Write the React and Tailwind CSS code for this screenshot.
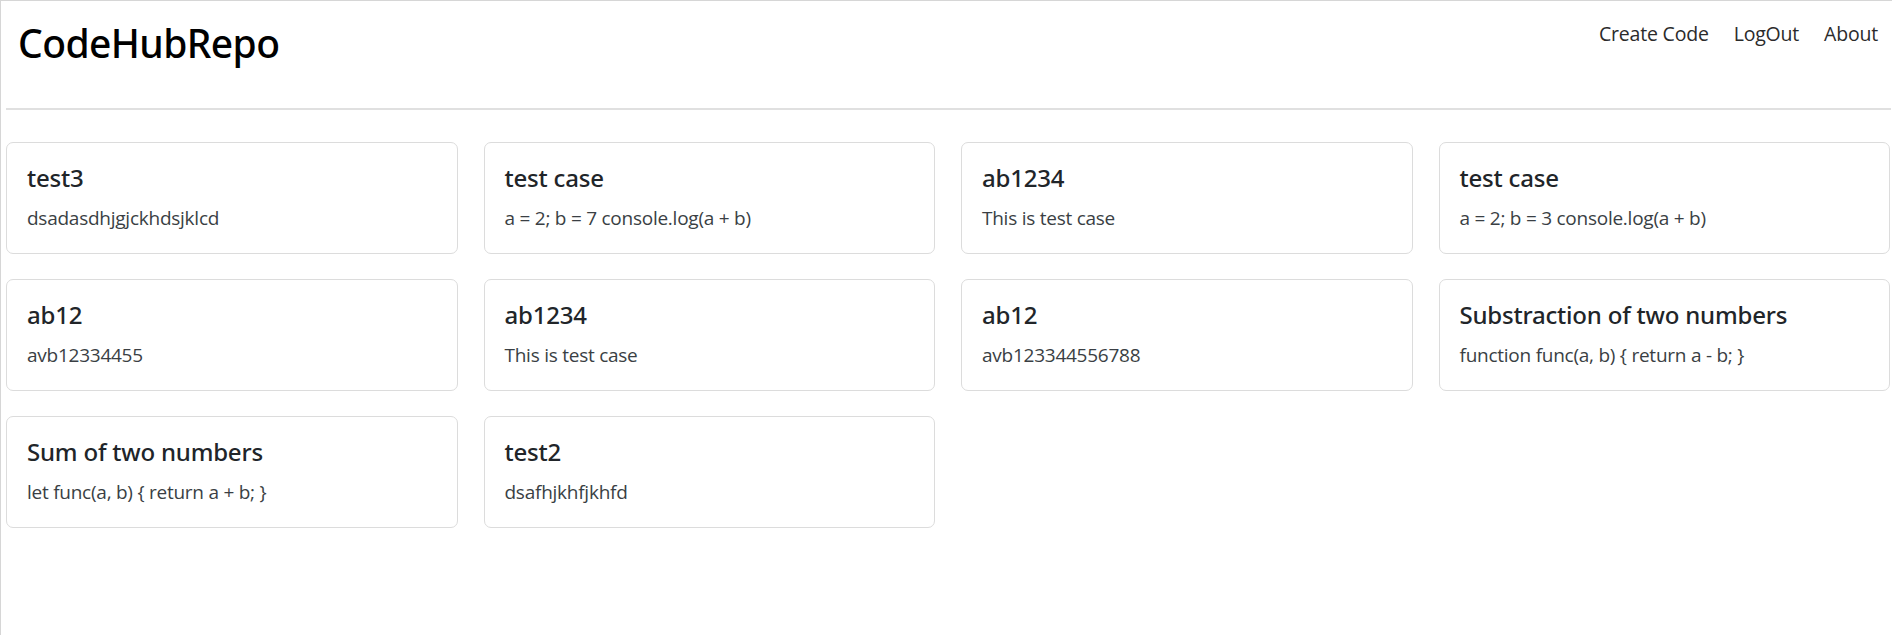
import React from "react";

const cards = [
  { t: "test3", d: "dsadasdhjgjckhdsjklcd" },
  { t: "test case", d: "a = 2; b = 7 console.log(a + b)" },
  { t: "ab1234", d: "This is test case" },
  { t: "test case", d: "a = 2; b = 3 console.log(a + b)" },
  { t: "ab12", d: "avb12334455" },
  { t: "ab1234", d: "This is test case" },
  { t: "ab12", d: "avb123344556788" },
  { t: "Substraction of two numbers", d: "function func(a, b) { return a - b; }" },
  { t: "Sum of two numbers", d: "let func(a, b) { return a + b; }" },
  { t: "test2", d: "dsafhjkhfjkhfd" },
];

export default function App() {
  return (
    <div
      className="min-h-[635px] w-full bg-white border-l border-t border-[#d6d6d6] text-[#212529]"
      style={{ fontFamily: '"Open Sans", "Noto Sans", sans-serif' }}
    >
      <nav className="flex items-start justify-between pl-[17px] pr-[14px]">
        <a
          className="mt-[18px] text-[39px] leading-[48px] font-medium text-black tracking-[-0.6px]"
          style={{ fontFamily: '"Noto Sans", "Open Sans", sans-serif' }}
        >
          CodeHubRepo
        </a>
        <ul className="flex gap-[25px] mt-[19px] text-[19.5px] leading-[28px] text-[#2b2b2b] tracking-[-0.2px]">
          <li>Create Code</li>
          <li>LogOut</li>
          <li>About</li>
        </ul>
      </nav>
      <div className="ml-[5px] mr-[1px] mt-[41px] border-t-2 border-[#e0e0e0]" />
      <div className="grid grid-cols-4 gap-x-[26px] gap-y-[25px] pl-[5px] pr-[2px] pt-[32px]">
        {cards.map((c, i) => (
          <div
            key={i}
            className="rounded-[7px] border border-[#dcdcdc] px-[20px] pt-[20px] pb-[20px]"
          >
            <h5
              className="text-[24px] leading-[30px] font-medium text-[#212529] mb-[10px] tracking-[-0.2px]"
              style={{ fontFamily: '"Noto Sans", "Open Sans", sans-serif' }}
            >
              {c.t}
            </h5>
            <p className="text-[19px] leading-[30px] text-[#3a3f44] tracking-[-0.25px]">{c.d}</p>
          </div>
        ))}
      </div>
    </div>
  );
}
